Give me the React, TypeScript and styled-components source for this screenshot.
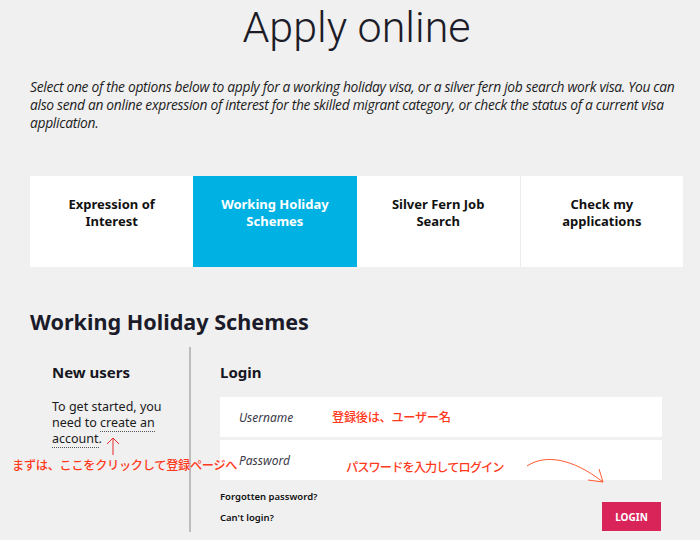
import React from "react";
import styled, { createGlobalStyle } from "styled-components";

const GlobalStyle = createGlobalStyle`
  html, body {
    margin: 0;
    padding: 0;
    background: #f0f0f0;
  }
  body {
    font-family: "Noto Sans", "Open Sans", Arial, sans-serif;
    color: #1a1a1a;
  }
`;

const Page = styled.div`
  width: 700px;
  height: 540px;
  overflow: hidden;
  position: relative;
`;

const Content = styled.div`
  margin-left: 30px;
  width: 653px;
`;

const PageTitle = styled.h1`
  margin: 0;
  padding-top: 3px;
  text-align: center;
  font-family: "Roboto", "Lato", sans-serif;
  font-weight: 300;
  font-size: 43px;
  line-height: 48px;
  color: #1c1c28;
`;

const Intro = styled.p`
  margin: 27px 0 0;
  width: 656px;
  font-family: "Open Sans", sans-serif;
  font-style: italic;
  font-size: 13.8px;
  line-height: 18px;
  letter-spacing: -0.3px;
  color: #1c1c1c;
`;

const Tabs = styled.div`
  display: grid;
  grid-template-columns: repeat(4, 1fr);
  margin-top: 44px;
  height: 91px;
  background: #fff;
`;

const Tab = styled.div<{ $active?: boolean; $divider?: boolean }>`
  display: flex;
  justify-content: center;
  padding-top: 20px;
  text-align: center;
  font-weight: 700;
  font-size: 13px;
  line-height: 17px;
  background: ${(p) => (p.$active ? "#00b2e3" : "#fff")};
  color: ${(p) => (p.$active ? "#fff" : "#111")};
  border-left: ${(p) => (p.$divider ? "1px solid #ececec" : "none")};
`;

const TabLabel = styled.span`
  width: 120px;
`;

const SectionTitle = styled.h2`
  margin: 41px 0 0;
  font-size: 21.6px;
  line-height: 28px;
  font-weight: 700;
  color: #1b1b2a;
`;

const Columns = styled.div`
  display: flex;
  margin-top: 11px;
`;

const NewUsers = styled.div`
  width: 137px;
  padding: 14px 0 0 22px;
  border-right: 2px solid #bdbdbd;
  height: 171px;
`;

const ColumnTitle = styled.h3`
  margin: 0;
  font-size: 15px;
  line-height: 22px;
  font-weight: 700;
  color: #161622;
`;

const BodyText = styled.p`
  margin: 16px 0 0;
  max-width: 112px;
  font-size: 12.5px;
  line-height: 16px;
  color: #1a1a1a;
`;

const DottedLink = styled.a`
  color: inherit;
  text-decoration: none;
  border-bottom: 1px dotted #555;
`;

const Login = styled.div`
  flex: 1;
  padding: 14px 21px 0 29px;
`;

const Fields = styled.div`
  display: flex;
  flex-direction: column;
  gap: 3px;
  margin-top: 14px;
`;

const Field = styled.div`
  display: flex;
  align-items: center;
  height: 40px;
  padding-left: 19px;
  background: #fff;
  font-style: italic;
  font-size: 12px;
  color: #3a3a48;
`;

const Bottom = styled.div`
  display: flex;
  justify-content: space-between;
`;

const SmallLinks = styled.div`
  display: flex;
  flex-direction: column;
  gap: 9px;
  padding-top: 11px;
`;

const SmallLink = styled.a`
  font-size: 9.5px;
  font-weight: 600;
  line-height: 12px;
  color: #111;
  text-decoration: none;
`;

const LoginButton = styled.button`
  margin-top: 21px;
  width: 61px;
  height: 31px;
  border: 1px solid #f2f2f2;
  background: #d9245a;
  color: #fff;
  font-family: "Noto Sans", sans-serif;
  font-size: 10px;
  font-weight: 700;
`;

const Note = styled.span<{ $x: number; $y: number; $tight?: boolean }>`
  position: absolute;
  left: ${(p) => p.$x}px;
  top: ${(p) => p.$y}px;
  font-family: "Noto Sans CJK JP", sans-serif;
  font-size: 12.2px;
  font-weight: 500;
  line-height: 14px;
  letter-spacing: ${(p) => (p.$tight ? "-0.9px" : "-0.3px")};
  color: #ff3a1c;
  white-space: nowrap;
`;

const Overlay = styled.svg`
  position: absolute;
  left: 0;
  top: 0;
  pointer-events: none;
`;

const App = () => {
  const tabs = [
    "Expression of Interest",
    "Working Holiday Schemes",
    "Silver Fern Job Search",
    "Check my applications",
  ];

  return (
    <Page>
      <GlobalStyle />
      <Content>
        <PageTitle>Apply online</PageTitle>
        <Intro>
          Select one of the options below to apply for a working holiday visa, or a silver fern job search work visa. You can
          also send an online expression of interest for the skilled migrant category, or check the status of a current visa
          application.
        </Intro>
        <Tabs>
          {tabs.map((t, i) => (
            <Tab key={t} $active={i === 1} $divider={i === 3}>
              <TabLabel>{t}</TabLabel>
            </Tab>
          ))}
        </Tabs>
        <SectionTitle>Working Holiday Schemes</SectionTitle>
        <Columns>
          <NewUsers>
            <ColumnTitle>New users</ColumnTitle>
            <BodyText>
              To get started, you need to <DottedLink>create an account</DottedLink>.
            </BodyText>
          </NewUsers>
          <Login>
            <ColumnTitle>Login</ColumnTitle>
            <Fields>
              <Field>Username</Field>
              <Field>Password</Field>
            </Fields>
            <Bottom>
              <SmallLinks>
                <SmallLink>Forgotten password?</SmallLink>
                <SmallLink>Can't login?</SmallLink>
              </SmallLinks>
              <LoginButton>LOGIN</LoginButton>
            </Bottom>
          </Login>
        </Columns>
      </Content>

      <Note $x={12} $y={458}>まずは、ここをクリックして登録ページへ</Note>
      <Note $x={332} $y={410}>登録後は、ユーザー名</Note>
      <Note $x={346} $y={460} $tight>パスワードを入力してログイン</Note>

      <Overlay width="700" height="540" viewBox="0 0 700 540">
        <g stroke="#e8282a" strokeWidth="1" fill="none">
          <line x1="113" y1="438" x2="113" y2="455" />
          <polyline points="107,444 113,438 119,444" />
        </g>
        <g stroke="#ff5a32" strokeWidth="1" fill="none">
          <path d="M527 466 C 545 454, 572 458, 603 482" />
          <line x1="603" y1="482" x2="599" y2="469" />
          <line x1="603" y1="482" x2="588" y2="480" />
        </g>
      </Overlay>
    </Page>
  );
};

export default App;
